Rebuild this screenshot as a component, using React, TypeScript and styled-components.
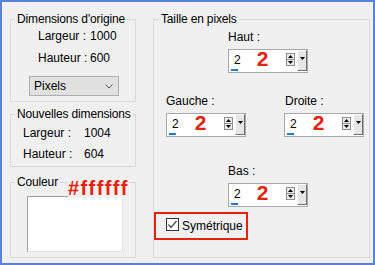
import styled, { createGlobalStyle } from 'styled-components';

const RED = '#e4230f';

const GlobalStyle = createGlobalStyle`
  html, body { margin: 0; padding: 0; background: #f0f0f0; }
  body { font-family: "Liberation Sans", Arial, sans-serif; }
`;

const Dialog = styled.div`
  box-sizing: border-box;
  width: 375px;
  height: 265px;
  border: 2px solid #5a82d8;
  background: #f0f0f0;
  padding: 10px 3px 5px 8px;
  display: flex;
  gap: 17px;
  font-size: 12px;
  color: #000;
`;

const LeftCol = styled.div`
  width: 126px;
  display: flex;
  flex-direction: column;
`;

const Group = styled.fieldset<{ $mt?: number; $grow?: boolean }>`
  position: relative;
  box-sizing: border-box;
  margin: ${(p) => p.$mt ?? 0}px 0 0 0;
  padding: 0 0 5px 0;
  min-width: 0;
  border: 1px solid #d9d9d9;
  display: flex;
  flex-direction: column;
  flex: ${(p) => (p.$grow ? 1 : 'none')};
`;

const Legend = styled.legend<{ $ml?: number }>`
  margin-left: ${(p) => p.$ml ?? 4}px;
  padding: 0 2px;
  line-height: 14px;
  font-size: 12px;
  white-space: nowrap;
  letter-spacing: -0.15px;
`;

const InfoGrid = styled.div<{ $indent: number; $top: number; $label: number; $gap: number }>`
  display: grid;
  grid-template-columns: ${(p) => p.$label}px auto;
  row-gap: ${(p) => p.$gap}px;
  padding: ${(p) => p.$top}px 0 0 ${(p) => p.$indent}px;
  line-height: 14px;
`;

const Select = styled.div`
  box-sizing: border-box;
  width: 90px;
  height: 20px;
  margin: 11px 0 0 18px;
  border: 1px solid #adadad;
  background: #e1e1e1;
  display: flex;
  align-items: center;
  justify-content: space-between;
  padding: 0 5px 0 4px;
`;

const Swatch = styled.div`
  box-sizing: border-box;
  width: 96px;
  height: 56px;
  margin: 7px 0 0 16px;
  background: #fff;
  border-style: solid;
  border-width: 1px;
  border-color: #a0a0a0 #e3e3e3 #e3e3e3 #a0a0a0;
`;

const HexNote = styled.span`
  position: absolute;
  left: 57px;
  top: -11px;
  font-size: 20px;
  line-height: 20px;
  font-weight: bold;
  letter-spacing: 1.4px;
  color: ${RED};
  background: #f0f0f0;
`;

const PixelsBody = styled.div`
  display: flex;
  flex-direction: column;
  align-items: flex-start;
  padding-top: 4px;
`;

const Block = styled.div<{ $mt: number; $ml: number }>`
  display: flex;
  flex-direction: column;
  margin: ${(p) => p.$mt}px 0 0 ${(p) => p.$ml}px;
`;

const SideRow = styled.div`
  display: flex;
  gap: 38px;
  margin: 21px 0 0 12px;
`;

const Label = styled.div<{ $ml?: number }>`
  line-height: 14px;
  margin: 0 0 5px ${(p) => p.$ml ?? 0}px;
`;

const Spin = styled.div`
  box-sizing: border-box;
  width: 80px;
  height: 24px;
  border: 1px solid #a9a9a9;
  background: #fff;
  display: flex;
  align-items: flex-start;
`;

const Field = styled.div`
  flex: 1;
  display: flex;
  flex-direction: column;
  padding: 3px 0 0 2px;
`;

const Digits = styled.div`
  display: flex;
  align-items: flex-start;
  line-height: 14px;
`;

const Value = styled.span`
  padding-left: 3px;
`;

const Mark = styled.span`
  margin: -1px 0 0 16px;
  font-size: 21px;
  font-weight: bold;
  line-height: 14px;
  color: ${RED};
`;

const Bar = styled.div`
  width: 7px;
  height: 2px;
  margin-top: 2px;
  background: #1c7cd5;
`;

const Arrows = styled.div`
  display: flex;
  flex-direction: column;
  margin-top: 3px;
`;

const ArrowBtn = styled.div<{ $down?: boolean }>`
  box-sizing: border-box;
  width: 9px;
  height: 7px;
  margin-top: ${(p) => (p.$down ? -1 : 0)}px;
  border: 1px solid #8f8f8f;
  background: #ececec;
  display: flex;
  align-items: center;
  justify-content: center;
`;

const DropBtn = styled.div`
  box-sizing: border-box;
  width: 10px;
  height: 21px;
  margin-left: 2px;
  border-style: solid;
  border-width: 1px;
  border-color: #fdfdfd #6f6f6f #6f6f6f #fdfdfd;
  background: #e6e6e6;
  display: flex;
  justify-content: center;
  padding-top: 6px;
`;

const CheckFrame = styled.label`
  box-sizing: border-box;
  width: 94px;
  height: 28px;
  margin-top: 5px;
  border: 2px solid ${RED};
  display: flex;
  align-items: center;
  gap: 3px;
  padding-left: 10px;
`;

const Box = styled.span`
  box-sizing: border-box;
  width: 13px;
  height: 13px;
  border: 1px solid #333;
  background: #fff;
  display: flex;
  margin-top: -3px;
`;

const Tri = ({ down }: { down?: boolean }) => (
  <svg width="5" height="3" viewBox="0 0 5 3">
    <polygon points={down ? '0,0 5,0 2.5,3' : '0,3 5,3 2.5,0'} fill="#000" />
  </svg>
);

const SpinBox = () => (
  <Spin>
    <Field>
      <Digits>
        <Value>2</Value>
        <Mark>2</Mark>
      </Digits>
      <Bar />
    </Field>
    <Arrows>
      <ArrowBtn>
        <Tri />
      </ArrowBtn>
      <ArrowBtn $down>
        <Tri down />
      </ArrowBtn>
    </Arrows>
    <DropBtn>
      <Tri down />
    </DropBtn>
  </Spin>
);

export default function App() {
  return (
    <>
      <GlobalStyle />
      <Dialog>
        <LeftCol>
          <Group>
            <Legend>Dimensions d'origine</Legend>
            <InfoGrid $indent={27} $top={3} $label={52} $gap={8}>
              <span>Largeur :</span>
              <span>1000</span>
              <span>Hauteur :</span>
              <span>600</span>
            </InfoGrid>
            <Select>
              <span>Pixels</span>
              <svg width="8" height="5" viewBox="0 0 8 5">
                <polyline points="0.5,0.5 4,4 7.5,0.5" fill="none" stroke="#555" strokeWidth="1" />
              </svg>
            </Select>
          </Group>
          <Group $mt={5}>
            <Legend>Nouvelles dimensions</Legend>
            <InfoGrid $indent={12} $top={5} $label={61} $gap={7}>
              <span>Largeur :</span>
              <span>1004</span>
              <span>Hauteur :</span>
              <span>604</span>
            </InfoGrid>
          </Group>
          <Group $mt={8} $grow>
            <Legend>Couleur</Legend>
            <HexNote>#ffffff</HexNote>
            <Swatch />
          </Group>
        </LeftCol>
        <Group $grow>
          <Legend $ml={5}>Taille en pixels</Legend>
          <PixelsBody>
            <Block $mt={0} $ml={74}>
              <Label>Haut :</Label>
              <SpinBox />
            </Block>
            <SideRow>
              <Block $mt={0} $ml={0}>
                <Label>Gauche :</Label>
                <SpinBox />
              </Block>
              <Block $mt={0} $ml={0}>
                <Label $ml={1}>Droite :</Label>
                <SpinBox />
              </Block>
            </SideRow>
            <Block $mt={27} $ml={74}>
              <Label>Bas :</Label>
              <SpinBox />
            </Block>
            <CheckFrame>
              <Box>
                <svg width="11" height="11" viewBox="0 0 11 11">
                  <polyline points="1.5,5.5 4,8.5 9.5,2" fill="none" stroke="#444" strokeWidth="1.2" />
                </svg>
              </Box>
              <span>Symétrique</span>
            </CheckFrame>
          </PixelsBody>
        </Group>
      </Dialog>
    </>
  );
}
